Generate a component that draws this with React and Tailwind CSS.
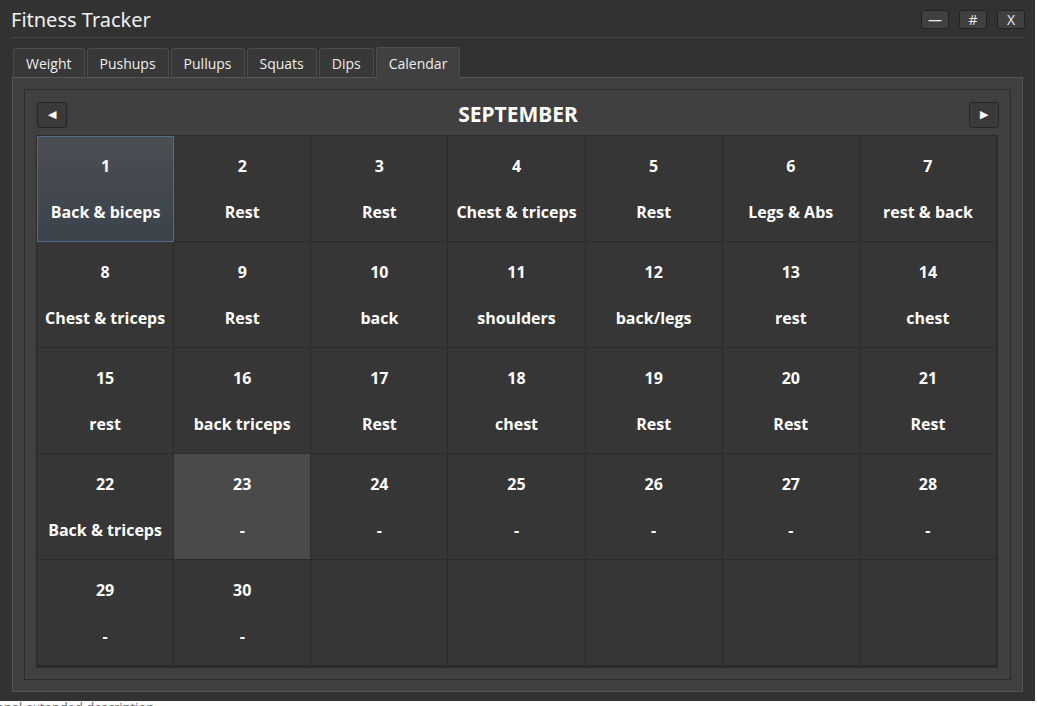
import { useState } from 'react';

const tabs = ['Weight', 'Pushups', 'Pullups', 'Squats', 'Dips', 'Calendar'];

const days = [
  'Back & biceps', 'Rest', 'Rest', 'Chest & triceps', 'Rest', 'Legs & Abs', 'rest & back',
  'Chest & triceps', 'Rest', 'back', 'shoulders', 'back/legs', 'rest', 'chest',
  'rest', 'back triceps', 'Rest', 'chest', 'Rest', 'Rest', 'Rest',
  'Back & triceps', '-', '-', '-', '-', '-', '-',
  '-', '-',
];

const font = { fontFamily: '"Open Sans", "Noto Sans", sans-serif' };

function DayCell({ day, label, selected, hovered }) {
  let cls = 'bg-[#363636] border-r border-b border-[#2b2b2b] pt-[19px]';
  if (selected) cls = 'bg-gradient-to-b from-[#4b4e53] to-[#3c434b] border border-[#4f6d8d] pt-[18px]';
  if (hovered) cls = 'bg-[#4a4a4a] border-r border-b border-[#2b2b2b] pt-[19px]';
  return (
    <div className={`h-[106px] flex flex-col items-center text-white font-bold text-[16px] ${cls}`}>
      {day && <span className="leading-[22px]">{day}</span>}
      {day && <span className="leading-[22px] mt-[24px]">{label}</span>}
    </div>
  );
}

export default function App() {
  const [active, setActive] = useState('Calendar');
  const cells = Array.from({ length: 35 }, (_, i) => i);

  return (
    <div className="w-[1037px] h-[706px] bg-white overflow-hidden" style={font}>
      <div className="w-[1035px] h-[701px] bg-[#323232] flex flex-col">
        {/* Title bar */}
        <div className="mx-[11px] h-[38px] flex items-center justify-between border-b border-[#474747] pt-[2px]">
          <span className="text-[20px] text-[#f0f0f0]" style={{ fontFamily: '"Noto Sans", sans-serif' }}>Fitness Tracker</span>
          <div className="flex gap-[10px] -mr-[1px]">
            {['—', '#', 'X'].map((b) => (
              <button key={b} className="w-[28px] h-[19px] rounded-[3px] border border-[#222] bg-[#404040] text-[#eee] text-[14px] leading-none flex items-center justify-center">
                {b}
              </button>
            ))}
          </div>
        </div>

        {/* Tabs */}
        <div className="flex items-end gap-[2px] ml-[13px] mt-[8px] h-[31px]">
          {tabs.map((t) => {
            const on = t === active;
            return (
              <button
                key={t}
                onClick={() => setActive(t)}
                className={`px-[12px] text-[14px] text-[#eee] rounded-t-[3px] border border-b-0 border-[#4c4c4c] ${on ? 'h-[31px] bg-[#404040] -mb-px relative z-10' : 'h-[29px] bg-[#383838]'}`}
              >
                {t}
              </button>
            );
          })}
        </div>

        {/* Tab pane */}
        <div className="mx-[12px] w-[1011px] h-[615px] bg-[#404040] border border-[#555] p-[11px]">
          <div className="h-full border border-[#2a2a2a] bg-[#404040] px-[11px] pt-[11px]">
            <div className="flex items-center justify-between h-[27px] mb-[7px]">
              <button className="w-[30px] h-[26px] rounded-[3px] border border-[#262626] bg-[#3a3a3a] flex items-center justify-center text-white text-[11px] ml-px">◀</button>
              <span className="text-white font-bold text-[21px]" style={{ fontFamily: '"Noto Sans", sans-serif' }}>SEPTEMBER</span>
              <button className="w-[30px] h-[26px] rounded-[3px] border border-[#262626] bg-[#3a3a3a] flex items-center justify-center text-white text-[11px]">▶</button>
            </div>
            <div className="grid grid-cols-7 border border-[#2a2a2a] border-b-2 bg-[#363636] w-[962px]">
              {cells.map((i) => (
                <DayCell
                  key={i}
                  day={i < 30 ? i + 1 : null}
                  label={days[i]}
                  selected={i === 0}
                  hovered={i === 22}
                />
              ))}
            </div>
          </div>
        </div>
      </div>
      <div className="text-[13px] text-[#666] -ml-[30px] leading-[14px] -mt-[1px]">Optional extended description</div>
    </div>
  );
}
